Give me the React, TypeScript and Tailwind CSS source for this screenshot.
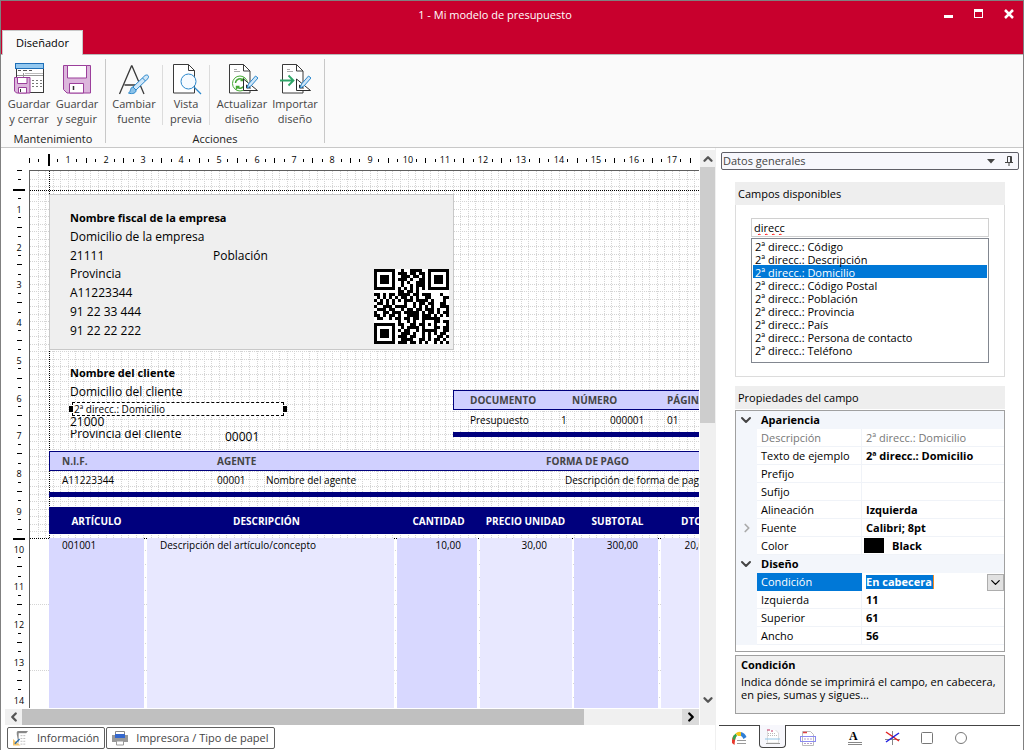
import { useState, type ReactNode } from "react";
import { ChevronDown, ChevronLeft, ChevronRight, ChevronUp } from "lucide-react";

const CM = 37.76;

const AVAILABLE_FIELDS = [
  "Código",
  "Descripción",
  "Domicilio",
  "Código Postal",
  "Población",
  "Provincia",
  "País",
  "Persona de contacto",
  "Teléfono",
];

const QR_ROWS = [
  "#######..#..####..#######",
  "#.....#.###.##.##.#.....#",
  "#.###.#..###.##.#.#.###.#",
  "#.###.#.###.#..##.#.###.#",
  "#.###.#..#.#..###.#.###.#",
  "#.....#..#..#.###.#.....#",
  "#######.#.#.#.#.#.#######",
  "........##.##.#..........",
  "##.#.##.####.##.###...#..",
  ".#.#.#.#.##.#.#..##....##",
  "#.#.#.#.#.###.####.#...#.",
  ".##.#.#...#..#.##.##..##.",
  "#..###.####..#.#.#.#..###",
  ".###.##..#.##.##.###.#..#",
  "#..##.###.#####.#.##.#.##",
  "##.#.##.#..####.###.#.#.#",
  ".##..#.##.##.##.######...",
  "........#..#.#..#...##.##",
  "#######.##..##.##.#.#...#",
  "#.....#..#.####.#...##.##",
  "#.###.#.#.##..#.#####..##",
  "#.###.#..###.#..#.#.#.##.",
  "#.###.#.###.##..#.#..##.#",
  "#.....#..####..##.#.##.#.",
  "#######.###.##.#.#..#.#.#",
];

// Fields dropped on the page, each at its own canvas position
const COMPANY_FIELDS = [
  { text: "Nombre fiscal de la empresa", place: "left-10 top-[39px] text-[11px] font-bold" },
  { text: "Domicilio de la empresa", place: "left-10 top-[58px] text-xs leading-4" },
  { text: "21111", place: "left-10 top-[77px] text-xs leading-4" },
  { text: "Población", place: "left-[183px] top-[77px] text-xs leading-4" },
  { text: "Provincia", place: "left-10 top-[95px] text-xs leading-4" },
  { text: "A11223344", place: "left-10 top-[114px] text-xs leading-4" },
  { text: "91 22 33 444", place: "left-10 top-[133px] text-xs leading-4" },
  { text: "91 22 22 222", place: "left-10 top-[152px] text-xs leading-4" },
  { text: "Nombre del cliente", place: "left-10 top-[194px] text-[11px] font-bold" },
  { text: "Domicilio del cliente", place: "left-10 top-[213px] text-xs leading-4" },
  { text: "21000", place: "left-10 top-[243px] text-xs leading-4" },
  { text: "00001", place: "left-[195px] top-[258px] text-xs leading-4" },
];

const DOCUMENT_LABELS = [
  { text: "DOCUMENTO", place: "left-[440px] top-[221px]" },
  { text: "NÚMERO", place: "left-[542px] top-[221px]" },
  { text: "PÁGINA", place: "left-[637px] top-[221px]" },
  { text: "N.I.F.", place: "left-8 top-[282px]" },
  { text: "AGENTE", place: "left-[187px] top-[282px]" },
  { text: "FORMA DE PAGO", place: "left-[516px] top-[282px]" },
];

const DOCUMENT_VALUES = [
  { text: "Presupuesto", place: "left-[440px] top-[241px]" },
  { text: "1", place: "left-[531px] top-[241px]" },
  { text: "000001", place: "left-[580px] top-[241px]" },
  { text: "01", place: "left-[637px] top-[241px]" },
  { text: "A11223344", place: "left-8 top-[301px]" },
  { text: "00001", place: "left-[187px] top-[301px]" },
  { text: "Nombre del agente", place: "left-[236px] top-[301px]" },
  { text: "Descripción de forma de pago", place: "left-[535px] top-[301px]" },
];

const COLUMNS = [
  { title: "ARTÍCULO", value: "001001", head: "w-[98px] pr-[3px]", cell: "mr-[3px] bg-[#d8d8ff] pl-[13px]" },
  { title: "DESCRIPCIÓN", value: "Descripción del artículo/concepto", head: "w-[250px] pr-[11px]", cell: "mr-[3px] bg-[#e8e8ff] pl-[13px]" },
  { title: "CANTIDAD", value: "10,00", head: "w-[83px]", cell: "mr-[3px] bg-[#d8d8ff] pr-4 text-right" },
  { title: "PRECIO UNIDAD", value: "30,00", head: "w-[94px] pr-[3px]", cell: "mr-[2px] bg-[#e8e8ff] pr-[25px] text-right" },
  { title: "SUBTOTAL", value: "300,00", head: "w-[87px]", cell: "mr-[3px] bg-[#d8d8ff] pr-5 text-right" },
  { title: "DTO.", value: "20,00", head: "w-[64px]", cell: "mr-[3px] bg-[#e8e8ff] pr-3 text-right" },
];

function IconSaveClose() {
  return (
    <svg width="32" height="32" viewBox="0 0 32 32" fill="none">
      <rect x="3.5" y="1.5" width="27" height="28" fill="#fff" stroke="#3a3a3a" />
      <rect x="2.5" y="0.5" width="28" height="5" fill="#93c8f0" stroke="#1e6fb8" />
      <path d="M5 7.500h3M10 7.500h4M16 7.500h3" stroke="#555" />
      <path d="M4 12.500h26M10.500 10v18" stroke="#999" />
      <path d="M12 10.500h18" stroke="#bbb" />
      <path d="M19 17.500h10M19 20.500h10M19 23.500h10" stroke="#777" strokeDasharray="2 2" />
      <path d="M1.500 14.500h15.500v15.500h-13.500l-2-2z" fill="#dcb6dc" stroke="#9b3f9b" />
      <path d="M4.500 14.500h9.500v6h-9.500zM5.500 24.500h8v5.500h-8z" fill="#fff" stroke="#9b3f9b" />
      <path d="M7.500 26v3" stroke="#333" />
    </svg>
  );
}

function IconSave() {
  return (
    <svg width="32" height="32" viewBox="0 0 32 32" fill="none">
      <path d="M2.500 2.500h27v27.500h-23.500l-3.500-3.500z" fill="#dcb6dc" stroke="#9b3f9b" />
      <path d="M6.500 2.500h19v12.500h-19zM8.500 20.500h14v9.500h-14z" fill="#fff" stroke="#9b3f9b" />
      <path d="M12.500 23v4" stroke="#333" strokeWidth="1.500" />
    </svg>
  );
}

function IconFont() {
  return (
    <svg width="32" height="32" viewBox="0 0 32 32" fill="none">
      <path d="M1.500 31l12-28h.5l12 28M6.500 22h15" stroke="#3a3a3a" strokeWidth="1.300" />
      <path d="M15 24l12-11.500c2.500-1.500 4.500.5 3 3l-12 11.500z" fill="#cfe6f8" stroke="#2a87cc" />
      <path d="M15 24c-3 0-2 5-4.500 6 4 1.500 8 0 7.500-3z" fill="#8ac2ea" stroke="#2a87cc" />
      <path d="M24.500 15l3 3" stroke="#2a87cc" />
    </svg>
  );
}

function IconPreview() {
  return (
    <svg width="32" height="32" viewBox="0 0 32 32" fill="none">
      <path d="M3.500 1.500h15l6 6v22.500h-21z" fill="#fff" stroke="#3a3a3a" />
      <path d="M18.500 1.500v6h6" stroke="#3a3a3a" />
      <circle cx="18.500" cy="18.500" r="7.500" fill="#f5faff" stroke="#2a87cc" />
      <path d="M24 24l7 7" stroke="#2a87cc" strokeWidth="1.300" />
    </svg>
  );
}

function SheetWithPencil({ children }: { children: ReactNode }) {
  return (
    <svg width="32" height="32" viewBox="0 0 32 32" fill="none">
      <path d="M3.500 30v-28.500h14l6.500 6.500v22z" fill="#fff" stroke="#3a3a3a" />
      <path d="M17.500 1.500v6.500h6.500" stroke="#3a3a3a" />
      <path d="M8 6.500h3M8 8.500h6" stroke="#aaa" />
      {children}
      <path d="M17.500 16v11.500h14z" fill="#fff" stroke="#2d2d2d" />
      <path d="M20.500 22v3h4z" fill="#fff" stroke="#2d2d2d" />
      <path d="M22.500 21l7-8 2.500 2-7 8-4 2z" fill="#cfe6f8" stroke="#2a87cc" />
    </svg>
  );
}

function IconRefresh() {
  return (
    <SheetWithPencil>
      <circle cx="14" cy="20.500" r="7.500" fill="#fff" stroke="#45a834" />
      <path d="M9.500 20a4.500 4.500 0 0 1 8-2.500M18.500 21a4.500 4.500 0 0 1-8 2.500M17.500 14.500v3h-3M10.500 26.500v-3h3" stroke="#45a834" strokeWidth="1.400" />
    </SheetWithPencil>
  );
}

function IconImport() {
  return (
    <SheetWithPencil>
      <path d="M1 17.500h13M9.500 12.500l5 5-5 5" stroke="#2fa568" strokeWidth="1.800" />
    </SheetWithPencil>
  );
}

function RibbonButton({ icon, lines, width }: { icon: ReactNode; lines: [string, string]; width: string }) {
  return (
    <button type="button" className={`flex flex-col items-center pt-2 leading-[15px] text-[#444] ${width}`}>
      {icon}
      <span className="whitespace-nowrap pt-px">{lines[0]}</span>
      <span className="whitespace-nowrap">{lines[1]}</span>
    </button>
  );
}

function Ribbon() {
  return (
    <div className="flex h-[93px] shrink-0 border-b border-[#c8c8c8] bg-[#fafafa] text-[11px]">
      <section className="my-1 flex w-[105px] flex-col border-r border-[#c8c8c8]">
        <div className="-mt-1 flex flex-1 pl-1">
          <RibbonButton width="w-12" icon={<IconSaveClose />} lines={["Guardar", "y cerrar"]} />
          <RibbonButton width="w-12" icon={<IconSave />} lines={["Guardar", "y seguir"]} />
        </div>
        <h2 className="text-center leading-[9px] text-[#222]">Mantenimiento</h2>
      </section>
      <section className="my-1 flex w-[219px] flex-col border-r border-[#c8c8c8]">
        <div className="-mt-1 flex flex-1">
          <RibbonButton width="w-14" icon={<IconFont />} lines={["Cambiar", "fuente"]} />
          <span className="mt-[10px] h-[60px] w-px bg-[#dcdcdc]" />
          <RibbonButton width="w-[46px]" icon={<IconPreview />} lines={["Vista", "previa"]} />
          <span className="mt-[10px] h-[60px] w-px bg-[#dcdcdc]" />
          <RibbonButton width="w-[64px]" icon={<IconRefresh />} lines={["Actualizar", "diseño"]} />
          <RibbonButton width="w-[42px]" icon={<IconImport />} lines={["Importar", "diseño"]} />
        </div>
        <h2 className="text-center leading-[9px] text-[#222]">Acciones</h2>
      </section>
    </div>
  );
}

function TitleBar() {
  return (
    <header className="flex h-[54px] shrink-0 flex-col justify-between border-b border-[#b9b9b9] bg-[#c8002d]">
      <div className="flex h-[29px] items-center text-white">
        <h1 className="flex-1 pl-[50px] text-center text-[11px]">1 - Mi modelo de presupuesto</h1>
        <div className="flex items-center gap-[10px] pb-1 pr-1">
          <button type="button" aria-label="Minimizar" className="p-[5px]">
            <svg width="10" height="10" viewBox="0 0 10 10"><path d="M0 6h9v3H0z" fill="currentColor" /></svg>
          </button>
          <button type="button" aria-label="Maximizar" className="p-[5px]">
            <svg width="10" height="10" viewBox="0 0 10 10"><path d="M0 0h9v9H0zM1 3v5h7V3z" fill="currentColor" fillRule="evenodd" /></svg>
          </button>
          <button type="button" aria-label="Cerrar" className="p-[5px]">
            <svg width="10" height="10" viewBox="0 0 10 10"><path d="M1 1l8 8M9 1l-8 8" stroke="currentColor" strokeWidth="2.500" /></svg>
          </button>
        </div>
      </div>
      <nav className="flex pl-px">
        <button type="button" className="-mb-px h-[25px] w-[81px] border-x border-t border-[#c8c8c8] bg-[#fafafa] text-[11px] text-black">
          Diseñador
        </button>
      </nav>
    </header>
  );
}

function HorizontalRuler() {
  // The paper is 21 cm wide; marks past the visible part are left out
  const quarters = Math.floor(Math.min(21, (window.innerWidth - 356) / CM) * 4);
  const marks: ReactNode[] = [];
  for (let i = 0; i <= quarters; i++) {
    const x = Math.round(29 + (i * CM) / 4);
    if (i === 2) marks.push(<rect key={i} x={x - 1} y={6} width={2} height={12} />);
    else if (i % 4 === 0 && i > 0)
      marks.push(<text key={i} x={x} y={15} fontSize={9} textAnchor="middle">{i / 4}</text>);
    else marks.push(<rect key={i} x={x - 1} y={i % 2 ? 11 : 10} width={1} height={i % 2 ? 3 : 5} />);
  }
  return <svg className="h-[22px] w-full shrink-0" shapeRendering="crispEdges">{marks}</svg>;
}

function VerticalRuler() {
  const quarters = Math.floor(Math.min(29.5, (window.innerHeight - 216) / CM) * 4);
  const marks: ReactNode[] = [];
  for (let i = 0; i <= quarters; i++) {
    const y = Math.round(1 + (i * CM) / 4);
    if (i === 2 || i === 39) marks.push(<rect key={i} x={12} y={y - 1} width={12} height={2} />);
    else if (i % 4 === 0 && i > 0)
      marks.push(<text key={i} x={18} y={y + 4} fontSize={9} textAnchor="middle">{i / 4}</text>);
    else marks.push(<rect key={i} x={i % 2 ? 17 : 16} y={y - 1} width={i % 2 ? 3 : 5} height={1} />);
  }
  return <svg className="absolute inset-0 h-full w-full" shapeRendering="crispEdges">{marks}</svg>;
}

function CanvasGrid() {
  let fine = "";
  for (let i = 1; i < 200; i++) fine += `M${Math.round(i * 7.55) + 0.5} 0V367`;
  for (let i = 1; i < 49; i++) fine += `M0 ${Math.round(i * 7.5) + 0.5}H1500`;
  let body = "";
  for (let i = 1; i < 40; i++) {
    const y = Math.round(367 + i * 13.3) - 0.5;
    body += i % 5 === 0 ? `M0 ${y}H1500` : `M115 ${y}h1M365 ${y}h1M449 ${y}h1M543 ${y}h1M629 ${y}h1`;
  }
  return (
    <svg className="absolute inset-0 h-full w-full" fill="none" shapeRendering="crispEdges">
      <path d={fine} stroke="#d4d4d4" strokeDasharray="1 1" />
      <path d={body} stroke="#d4d4d4" strokeDasharray="1 1" />
      <path d="M19.500 0V367M0 19.500H1500M0 367.500H1500" stroke="#000" strokeDasharray="1 1" />
    </svg>
  );
}

function QrCode() {
  let d = "";
  QR_ROWS.forEach((row, y) => {
    for (let x = 0; x < row.length; x++) if (row[x] === "#") d += `M${x} ${y}h1v1h-1z`;
  });
  return (
    <svg className="absolute left-[344px] top-[98px] h-[75px] w-[75px] bg-white" viewBox="0 0 25 25" shapeRendering="crispEdges">
      <path d={d} />
    </svg>
  );
}

function DesignCanvas() {
  return (
    <div className="relative min-w-0 flex-1 overflow-hidden border-l border-t border-[#5f5f5f] bg-white leading-4">
      <CanvasGrid />
      <div className="absolute left-[19px] top-[23px] h-[156px] w-[405px] border border-[#c8c8c8] bg-[#efefef]" />
      <QrCode />
      {COMPANY_FIELDS.map((f) => (
        <span key={f.text} className={`absolute whitespace-nowrap ${f.place}`}>{f.text}</span>
      ))}
      {/* This field is lower than its text, so the capitals are cut */}
      <div className="absolute left-10 top-[259px] flex h-3 items-end overflow-hidden whitespace-nowrap text-xs leading-4">
        Provincia del cliente
      </div>
      {/* Selected field with its two width handles */}
      <div className="absolute left-[42px] top-[231px] flex h-[14px] w-[212px] items-center border border-dashed border-black bg-white pl-px text-[10px]">
        2ª direcc.: Domicilio
        <i className="absolute -left-1 top-[3px] h-[6px] w-1 bg-black" />
        <i className="absolute -right-1 top-[3px] h-[6px] w-1 bg-black" />
      </div>

      <div className="absolute -right-px left-[423px] top-[219px] h-5 border border-[#00007d] bg-[#d0d0ff]" />
      <div className="absolute left-[423px] right-0 top-[261px] h-[5px] bg-[#00007d]" />
      <div className="absolute -right-px left-[19px] top-[280px] h-5 border border-[#00007d] bg-[#d0d0ff]" />
      <div className="absolute left-[19px] right-0 top-[321px] h-[5px] bg-[#00007d]" />
      {DOCUMENT_LABELS.map((f) => (
        <span key={f.text} className={`absolute whitespace-nowrap text-[10px] font-bold text-[#444] ${f.place}`}>{f.text}</span>
      ))}
      {DOCUMENT_VALUES.map((f) => (
        <span key={f.text + f.place} className={`absolute whitespace-nowrap text-[10px] ${f.place}`}>{f.text}</span>
      ))}

      <table className="absolute bottom-0 left-[19px] top-[336px] w-[676px] table-fixed border-collapse text-[10px]">
        <thead className="bg-[#00007d] text-white">
          <tr className="h-[27px]">
            {COLUMNS.map((c) => (
              <th key={c.title} className={`whitespace-nowrap py-0 font-bold ${c.head}`}>{c.title}</th>
            ))}
          </tr>
        </thead>
        <tbody>
          <tr className="align-top leading-[14px]">
            {COLUMNS.map((c) => (
              <td key={c.title} className="p-0 pt-1">
                <div className={`h-[calc(100vh-580px)] min-h-[170px] whitespace-nowrap ${c.cell}`}>{c.value}</div>
              </td>
            ))}
          </tr>
        </tbody>
      </table>
    </div>
  );
}

function Designer() {
  return (
    <main className="flex min-w-0 flex-1 flex-col">
      <div className="flex min-h-0 flex-1">
        <div className="flex min-w-0 flex-1 flex-col pr-px">
          <HorizontalRuler />
          <div className="flex min-h-0 flex-1">
            <div className="relative w-7 shrink-0 overflow-hidden">
              <VerticalRuler />
            </div>
            <DesignCanvas />
          </div>
        </div>
        <div className="mt-[2px] flex w-[15px] flex-col bg-[#f0f0f0] text-[#555]">
          <button type="button" aria-label="Subir" className="flex h-[17px] items-center justify-center">
            <ChevronUp size={14} strokeWidth={4} />
          </button>
          <div className="h-64 bg-[#cdcdcd]" />
          <button type="button" aria-label="Bajar" className="mt-auto flex h-[17px] items-center justify-center">
            <ChevronDown size={14} strokeWidth={4} />
          </button>
        </div>
      </div>
      <div className="flex h-[17px] shrink-0 pl-1">
        <div className="mr-px mt-px flex flex-1 bg-[#f0f0f0]">
          <button type="button" aria-label="Izquierda" className="flex w-[17px] items-center justify-center text-[#555]">
            <ChevronLeft size={14} strokeWidth={4} />
          </button>
          <div className="w-[81%] bg-[#c0c0c0]" />
          <button type="button" aria-label="Derecha" className="ml-auto flex w-[17px] items-center justify-center bg-[#dadada]">
            <ChevronRight size={14} strokeWidth={4} />
          </button>
        </div>
        <div className="w-[15px] bg-[#f0f0f0]" />
      </div>
      <div className="flex h-[25px] shrink-0 gap-px pl-[6px] pt-[2px] text-[11px] text-[#444]">
        <button type="button" className="flex h-[22px] items-center gap-2 rounded-xs border border-[#5f5f5f] px-[5px]">
          <svg width="16" height="16" viewBox="0 0 17 16" fill="none">
            <path d="M4 4V2q0-1.500 2-1.500h10L14 3H6v12" fill="#888" />
            <path d="M6.500 3.500h7v11h-7z" fill="#fff" />
            <path d="M8 5.500h5M8 8.500h5M8 11.500h5M8 14.500h5" stroke="#bbb" strokeDasharray="2 1" />
            <path d="M0 9v7h8z" fill="#f3c56e" />
            <path d="M2 14l5-5" stroke="#2a6ca8" strokeWidth="1.500" />
          </svg>
          Información
        </button>
        <button type="button" className="flex h-[22px] items-center gap-2 rounded-xs border border-[#5f5f5f] px-[5px]">
          <svg width="16" height="15" viewBox="0 0 16 15" fill="none">
            <path d="M0 4h16v7H0z" fill="#999" />
            <path d="M3.500 3V.5h9V3" fill="#fff" stroke="#888" />
            <path d="M3 3h10v4H3z" fill="#3366cc" />
            <path d="M4.500 10h7v4h-7z" fill="#fff" stroke="#999" />
          </svg>
          Impresora / Tipo de papel
        </button>
      </div>
    </main>
  );
}

function PropertyRow({ name, value, muted, expandable }: { name: string; value?: ReactNode; muted?: boolean; expandable?: boolean }) {
  return (
    <tr className={`h-[18px] ${muted ? "text-[#777]" : ""}`}>
      <td className="bg-[#f3f6fb] p-0">
        {expandable && <ChevronRight size={14} strokeWidth={3} className="mx-auto text-[#aaa]" />}
      </td>
      <th scope="row" className="border-b border-r border-[#f0f3f8] p-0 pl-1 text-left font-normal">{name}</th>
      <td className={`border-b border-[#f0f3f8] p-0 pl-1 ${muted ? "" : "font-bold"}`}>{value}</td>
    </tr>
  );
}

function CategoryRow({ name }: { name: string }) {
  return (
    <tr className="h-[18px] bg-[#f3f6fb]">
      <td className="p-0 pr-[2px]"><ChevronDown size={16} strokeWidth={3} className="mx-auto text-[#444]" /></td>
      <th colSpan={2} className="p-0 pl-1 text-left font-bold">{name}</th>
    </tr>
  );
}

function PropertyGrid() {
  return (
    <div className="mt-px h-[242px] border border-[#a0a0a0] text-[11px] leading-4">
      <table className="w-full table-fixed border-separate border-spacing-0">
        <colgroup>
          <col className="w-[21px]" />
          <col className="w-[105px]" />
          <col />
        </colgroup>
        <tbody>
          <CategoryRow name="Apariencia" />
          <PropertyRow name="Descripción" value="2ª direcc.: Domicilio" muted />
          <PropertyRow name="Texto de ejemplo" value="2ª direcc.: Domicilio" />
          <PropertyRow name="Prefijo" />
          <PropertyRow name="Sufijo" />
          <PropertyRow name="Alineación" value="Izquierda" />
          <PropertyRow name="Fuente" value="Calibri; 8pt" expandable />
          <PropertyRow
            name="Color"
            value={
              <span className="-ml-[2px] flex items-center gap-2">
                <i className="h-[15px] w-5 bg-black" />
                Black
              </span>
            }
          />
          <CategoryRow name="Diseño" />
          <tr className="h-[18px]">
            <td className="bg-[#f3f6fb] p-0" />
            <th scope="row" className="bg-[#0078d7] p-0 pl-1 text-left font-normal text-white">
              <label htmlFor="condicion">Condición</label>
            </th>
            <td className="p-0 pl-1">
              <div className="flex h-[18px] items-center justify-between">
                <input
                  id="condicion"
                  defaultValue="En cabecera"
                  className="h-[14px] w-[68px] border-r border-[#f58a1f] bg-[#0078d7] font-bold text-white outline-none"
                />
                <button type="button" aria-label="Abrir lista" className="flex h-[17px] w-[17px] items-center justify-center border border-[#adadad] bg-[#e1e1e1]">
                  <ChevronDown size={15} className="shrink-0" />
                </button>
              </div>
            </td>
          </tr>
          <PropertyRow name="Izquierda" value="11" />
          <PropertyRow name="Superior" value="61" />
          <PropertyRow name="Ancho" value="56" />
        </tbody>
      </table>
    </div>
  );
}

function PanelTabs() {
  return (
    <nav className="mx-[3px] mt-auto flex h-[25px] border-t border-[#444]">
      <button type="button" aria-label="Datos" className="flex w-10 items-center justify-center">
        <svg width="16" height="14" viewBox="0 0 16 14" fill="none">
          <path d="M1 9q0-3 2-5l2 2q-1 2-1.500 8L1 12z" fill="#e8392d" />
          <path d="M1.500 8Q2 4 5 2.500L6 5Q4 6 4 9z" fill="#2fa84f" />
          <path d="M4.500 2.500Q7 0 10 1v4L7 5z" fill="#f5c518" />
          <path d="M10 1q4 1 5.500 5l-3 2Q11 5 10 5z" fill="#2f7fd6" />
          <path d="M6 9.500h9M6 12.500h9" stroke="#999" />
        </svg>
      </button>
      <button type="button" aria-label="Campos" className="-mt-px flex h-[23px] w-[27px] items-center justify-center rounded-b border-x border-b border-[#444] bg-[#f7f7fc]">
        <svg width="16" height="17" viewBox="0 0 16 17" fill="none">
          <path d="M2.500 2v13h11V5l-3-3" fill="#fff" stroke="#ddd" />
          <path d="M2 2h3M6 3h2" stroke="#c03060" />
          <path d="M3 5.500h7M3 7.500h9" stroke="#bbb" strokeDasharray="1 1" />
          <path d="M0 11h15" stroke="#8ec5e8" />
          <path d="M1 15.500h14" stroke="#999" />
        </svg>
      </button>
      <button type="button" aria-label="Secciones" className="flex w-[43px] items-center justify-center">
        <svg width="16" height="17" viewBox="0 0 16 17" fill="none">
          <path d="M2.500 15.500v-14h8l3 3v11z" fill="#fff" stroke="#bbb" />
          <path d="M3 2.500h4" stroke="#e04040" strokeWidth="1.500" />
          <path d="M0 6.500h16M0 11.500h16M.5 6.500v5M15.500 6.500v5" stroke="#8a8af0" />
          <path d="M4 9h8M4 13.500h8" stroke="#b8a0c8" strokeDasharray="2 1" />
        </svg>
      </button>
      <button type="button" aria-label="Texto" className="ml-2 flex w-9 items-center justify-center">
        <span className="flex w-[14px] flex-col gap-px pb-px">
          <b className="pl-px text-left font-['Liberation_Serif',serif] text-[12px] leading-[10px]">A</b>
          <i className="h-[3px] border-y border-[#888]" />
        </span>
      </button>
      <button type="button" aria-label="Línea" className="flex w-10 items-center justify-center">
        <svg width="16" height="16" viewBox="0 0 16 16" fill="none">
          <path d="M7.500 1v14M0 9.500h15" stroke="#888" />
          <path d="M1 2l13 9" stroke="#e02020" strokeWidth="1.500" />
          <path d="M1 12L14 3" stroke="#2020e0" strokeWidth="1.500" />
        </svg>
      </button>
      <button type="button" aria-label="Rectángulo" className="flex w-7 items-center justify-center">
        <svg width="12" height="12" viewBox="0 0 12 12" fill="none"><rect x=".5" y=".5" width="11" height="11" rx="1" stroke="#777" /></svg>
      </button>
      <button type="button" aria-label="Elipse" className="flex w-10 items-center justify-center">
        <svg width="12" height="12" viewBox="0 0 12 12" fill="none"><circle cx="6" cy="6" r="5.500" stroke="#777" /></svg>
      </button>
    </nav>
  );
}

function SidePanel() {
  const [query, setQuery] = useState("direcc");
  const [selected, setSelected] = useState("Domicilio");

  return (
    <aside className="flex w-[308px] shrink-0 flex-col border-l border-[#f0f0f0]">
      <button type="button" className="ml-[5px] mr-1 mt-1 flex h-[18px] items-center rounded-xs border border-[#5f5f68] bg-[#f7f7fc] px-px text-[11px] text-[#444]">
        Datos generales
        <svg className="ml-auto mr-[10px]" width="8" height="5" viewBox="0 0 8 5"><path d="M0 0h8L4 4.500z" fill="#444" /></svg>
        <svg className="mr-1" width="8" height="10" viewBox="0 0 8 10" fill="none">
          <path d="M2.500 6V.5h4V6M0 6.500h8M4 7v3M5.500 1v5" stroke="#444" />
        </svg>
      </button>

      <div className="flex flex-col pl-[19px] pr-[18px] pt-3">
        <h2 className="h-[23px] bg-[#eee] px-[3px] text-[11px] leading-6">Campos disponibles</h2>
        <div className="flex h-[172px] flex-col gap-px border border-t-0 border-[#dcdcdc] px-[15px] pt-[13px]">
          <input
            aria-label="Buscar campo"
            value={query}
            onChange={(e) => setQuery(e.target.value)}
            spellCheck={false}
            className="h-[19px] w-full border border-[#d0d0d0] px-[2px] text-[11px] leading-4 underline decoration-[#ff0000] decoration-wavy decoration-1 underline-offset-1 outline-none"
          />
          <select
            aria-label="Campos disponibles"
            size={9}
            value={selected}
            onChange={(e) => setSelected(e.target.value)}
            className="h-[125px] w-full overflow-hidden border border-[#828790] px-px py-0 text-[11px] outline-none"
          >
            {AVAILABLE_FIELDS.map((name) => (
              <option
                key={name}
                value={name}
                className="h-[13px] min-h-0 p-0 pl-[2px] leading-[13px] checked:bg-[linear-gradient(#0078d7,#0078d7)] checked:[-webkit-text-fill-color:white]"
              >
                2ª direcc.: {name}
              </option>
            ))}
          </select>
        </div>

        <h2 className="mt-[9px] h-[23px] bg-[#eee] px-[3px] text-[11px] leading-6">Propiedades del campo</h2>
        <PropertyGrid />
        <div className="mt-[3px] h-[59px] border border-[#a0a0a0] bg-[#f0f0f0] px-[5px] pt-px text-[11px]">
          <h3 className="font-bold leading-4">Condición</h3>
          <p className="pt-[2px] leading-[13px]">Indica dónde se imprimirá el campo, en cabecera, en pies, sumas y sigues...</p>
        </div>
      </div>
      <PanelTabs />
    </aside>
  );
}

export default function App() {
  return (
    <div className="flex h-screen min-h-[750px] flex-col border-x border-t border-[#808080] bg-white font-['Open_Sans','Noto_Sans',sans-serif] text-black">
      <TitleBar />
      <Ribbon />
      <div className="flex min-h-0 flex-1">
        <Designer />
        <SidePanel />
      </div>
    </div>
  );
}
